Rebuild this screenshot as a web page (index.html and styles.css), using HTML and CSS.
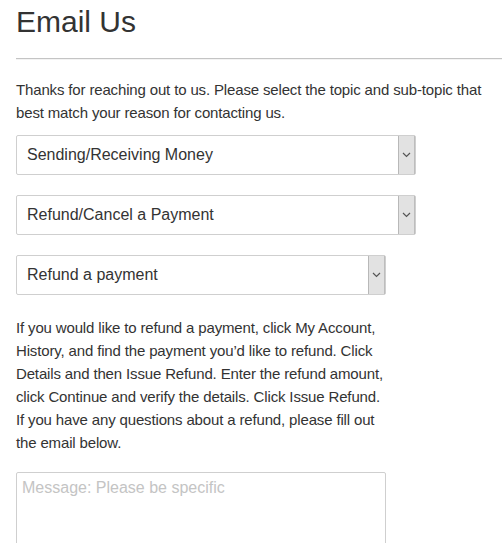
FILE: index.html
```html
<!DOCTYPE html>
<html>
<head>
<meta charset="utf-8">
<link rel="stylesheet" href="styles.css">
</head>
<body>
<div class="page">
  <h1 class="title">Email Us</h1>
  <hr class="rule">
  <p class="intro">Thanks for reaching out to us. Please select the topic and sub-topic that best match your reason for contacting us.</p>
  <div class="select wide">
    <span class="select-text">Sending/Receiving Money</span>
    <span class="arrow"><svg width="9" height="6" viewBox="0 0 9 6"><path d="M1 1 L4.5 4.5 L8 1" fill="none" stroke="#555" stroke-width="1.2"/></svg></span>
  </div>
  <div class="select wide">
    <span class="select-text">Refund/Cancel a Payment</span>
    <span class="arrow"><svg width="9" height="6" viewBox="0 0 9 6"><path d="M1 1 L4.5 4.5 L8 1" fill="none" stroke="#555" stroke-width="1.2"/></svg></span>
  </div>
  <div class="select narrow">
    <span class="select-text">Refund a payment</span>
    <span class="arrow"><svg width="9" height="6" viewBox="0 0 9 6"><path d="M1 1 L4.5 4.5 L8 1" fill="none" stroke="#555" stroke-width="1.2"/></svg></span>
  </div>
  <p class="info">If you would like to refund a payment, click My Account, History, and find the payment you’d like to refund. Click Details and then Issue Refund. Enter the refund amount, click Continue and verify the details. Click Issue Refund. If you have any questions about a refund, please fill out the email below.</p>
  <textarea class="message" placeholder="Message: Please be specific"></textarea>
</div>
</body>
</html>
```
FILE: styles.css
```css
html, body {
  margin: 0;
  padding: 0;
  background: #fff;
}
body {
  font-family: "Liberation Sans", Arial, sans-serif;
  color: #333;
}
.page {
  padding: 4px 0 0 16px;
}
.title {
  margin: 0;
  font-size: 30px;
  line-height: 36px;
  font-weight: normal;
  color: #333;
}
.rule {
  margin: 18px 0 0 0;
  height: 0;
  border: 0;
  border-top: 1px solid #c4c4c4;
  border-bottom: 1px solid #f3f3f3;
}
.intro {
  margin: 18px 0 0 0;
  font-size: 15px;
  line-height: 23px;
  letter-spacing: -0.15px;
}
.select {
  display: flex;
  align-items: stretch;
  height: 40px;
  box-sizing: border-box;
  border: 1px solid #cfcfcf;
  border-radius: 2px;
  background: #fff;
  margin-top: 20px;
}
.intro + .select {
  margin-top: 11px;
}
.wide { width: 400px; }
.narrow { width: 370px; }
.select-text {
  flex: 1;
  padding-left: 10px;
  font-size: 16px;
  line-height: 38px;
  color: #333;
}
.arrow {
  width: 15px;
  background: #e2e2e2;
  border-left: 1px solid #b8b8b8;
  border-right: 1px solid #bdbdbd;
  display: flex;
  align-items: center;
  justify-content: center;
}
.info {
  margin: 21px 0 0 0;
  width: 372px;
  font-size: 15px;
  line-height: 23px;
  letter-spacing: -0.15px;
}
.message {
  display: block;
  margin-top: 18px;
  width: 370px;
  height: 120px;
  box-sizing: border-box;
  border: 1px solid #cfcfcf;
  border-radius: 2px;
  padding: 6px 5px;
  font-family: "Liberation Sans", Arial, sans-serif;
  font-size: 16px;
  resize: none;
  color: #333;
}
.message::placeholder {
  color: #c4c4c4;
}
```
